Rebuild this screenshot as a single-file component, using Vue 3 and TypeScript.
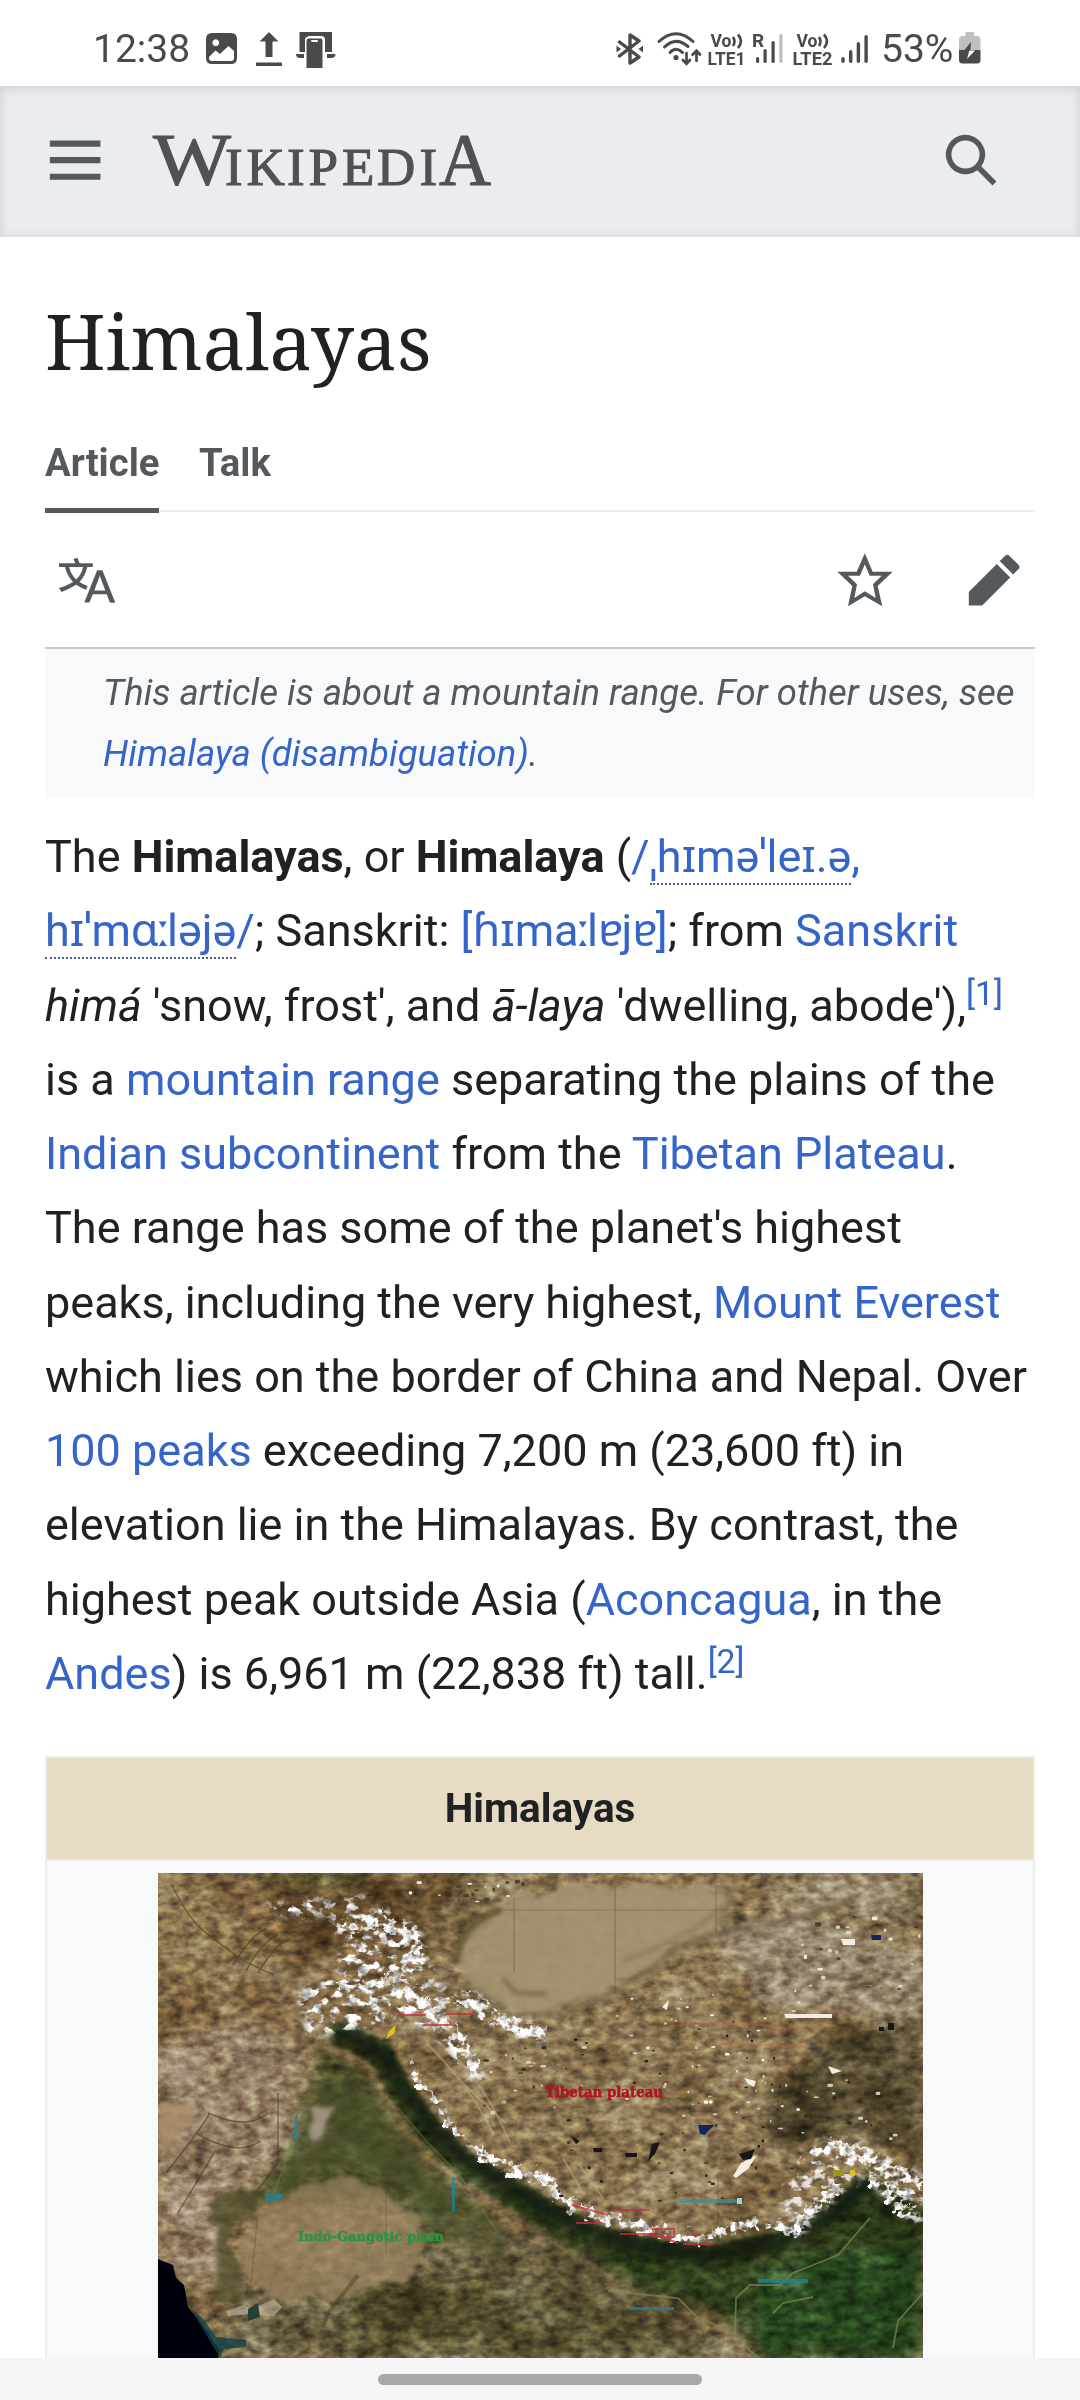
<script setup lang="ts">
interface Speck {
  x: number
  y: number
  w: number
  h: number
  fill: string
}

// Small deterministic generator so the lakes and snow patches stay in place.
function createRandom(seed: number): () => number {
  let s = seed
  return () => {
    s = (s * 16807) % 2147483647
    return s / 2147483647
  }
}

const rand = createRandom(4711)

function scatter(n: number, x0: number, y0: number, x1: number, y1: number, fills: string[], max: number): Speck[] {
  return Array.from({ length: n }, () => ({
    x: x0 + rand() * (x1 - x0),
    y: y0 + rand() * (y1 - y0),
    w: 1.5 + rand() * max,
    h: 1.2 + rand() * max * 0.6,
    fill: fills[Math.floor(rand() * fills.length)],
  }))
}

const specks: Speck[] = [
  ...scatter(55, 400, 140, 640, 330, ['#2b2a1d', '#1d2420', '#3a3622'], 3.2),
  ...scatter(50, 450, 115, 640, 250, ['#e6dccb', '#cdbfa5', '#fff8ee'], 3.4),
  ...scatter(24, 320, 170, 430, 250, ['#d9cdb5', '#3d3521', '#b7a481'], 4),
  ...scatter(26, 640, 40, 765, 120, ['#ddd2c4', '#efe9e4', '#4a4029'], 5),
  ...scatter(26, 600, 200, 740, 270, ['#d8cdb8', '#cfc6b4', '#2e2a1b'], 4),
  ...scatter(20, 250, 4, 370, 30, ['#efe8dc', '#4f4428'], 5),
]

const signalBars: number[] = [6, 13, 21, 28]
</script>

<template>
  <div class="screen">
    <div class="status">
      <span class="clock">12:38</span>
      <svg class="st-photo" width="31" height="31" viewBox="0 0 31 31">
        <path fill="#4a4a4a" fill-rule="evenodd" d="M6 0H25Q31 0 31 6V25Q31 31 25 31H6Q0 31 0 25V6Q0 0 6 0ZM9.8 6.3a3.4 3.4 0 1 0 .01 0ZM3 24.5Q3 28 6 28H25Q28 28 28 25V18L22.5 13 14 21 9.5 17.5 3 24Z" />
      </svg>
      <svg class="st-up" width="26" height="34" viewBox="0 0 26 34">
        <path fill="#4a4a4a" d="M13 0 22.5 9.5H16.5V25H9.5V9.5H3.5ZM0 30.5H26V34H0Z" />
      </svg>
      <svg class="st-link" width="40" height="37" viewBox="0 0 40 37">
        <path fill="#4a4a4a" d="M3.5 0H36V20H29V8Q29 4 25 4H14Q10 4 10 8V20H3.5ZM0 22H8V26H4Q0 26 0 22ZM31 22H39.5Q39.5 26 35 26H31Z" />
        <rect x="9" y="5" width="19" height="32" rx="2.500" fill="#fff" />
        <path fill="#4a4a4a" d="M12.500 6.500H25Q26.500 6.500 26.500 9V36H10.500V9Q10.500 6.500 12.500 6.500Z" />
        <rect x="15" y="8" width="7" height="2" rx="1" fill="#fff" />
      </svg>

      <svg class="st-bt" width="28" height="32" viewBox="0 0 28 32">
        <path fill="none" stroke="#4a4a4a" stroke-width="3.4" stroke-linejoin="round" stroke-linecap="round" d="M3.5 9 23 24 14 30V2L23 8 3.5 23" />
        <path fill="#4a4a4a" d="M.5 12.500 5 16 .5 19.5ZM27 12.500 22.500 16 27 19.5Z" />
      </svg>
      <svg class="st-wifi" width="46" height="34" viewBox="0 0 46 34">
        <g fill="none" stroke="#4a4a4a" stroke-width="3" stroke-linecap="round">
          <path d="M2 9.500Q19-6 36 9.500" />
          <path d="M7.500 15Q19 4 31 14.500" />
          <path d="M13 20.500Q19 14 25.500 20.500" />
          <path d="M29.500 21V31.500M25.800 28 29.500 31.700 33 28M39.500 29V19M35.500 22.800 39.500 18.800 43 22.500" stroke-width="2.700" />
        </g>
        <circle cx="19" cy="25.500" r="2.600" fill="#4a4a4a" />
      </svg>
      <svg class="st-lte1" width="42" height="42" viewBox="-2 -4 42 42">
        <text x="2.500" y="15" font-size="17.500" textLength="21" lengthAdjust="spacingAndGlyphs">Vo</text>
        <path d="M25 5Q28 9.500 25 14M30 2.500Q36 9.500 30 16" fill="none" stroke="#4a4a4a" stroke-width="2.700" />
        <text x="-.5" y="32.500" font-size="18.500" textLength="38" lengthAdjust="spacingAndGlyphs">LTE1</text>
      </svg>
      <svg class="st-sig1" width="33" height="38" viewBox="-2 -2 33 38">
        <text x="-1" y="15" font-size="19">R</text>
        <rect x="3" y="25" width="3.200" height="6" rx="1.600" fill="#4a4a4a" />
        <rect x="10.500" y="17" width="3.200" height="14" rx="1.600" fill="#4a4a4a" />
        <rect x="18.500" y="9" width="3.200" height="22" rx="1.600" fill="#4a4a4a" />
        <rect x="26.300" y="2" width="3.200" height="29" rx="1.600" fill="#bdbdbd" />
      </svg>
      <svg class="st-lte2" width="44" height="42" viewBox="-2 -4 44 42">
        <text x="3.500" y="15" font-size="17.500" textLength="21" lengthAdjust="spacingAndGlyphs">Vo</text>
        <path d="M26 5Q29 9.500 26 14M31 2.500Q37 9.500 31 16" fill="none" stroke="#4a4a4a" stroke-width="2.700" />
        <text x="-.5" y="32.500" font-size="18.500" textLength="40" lengthAdjust="spacingAndGlyphs">LTE2</text>
      </svg>
      <svg class="st-sig2" width="28" height="34" viewBox="0 0 28 34">
        <rect v-for="(h, i) in signalBars" :key="i" :x="0.3 + i * 7.7" :y="31 - h" width="3.400" :height="h" rx="1.700" fill="#4a4a4a" />
      </svg>
      <span class="percent">53%</span>
      <svg class="st-bat" width="22" height="32" viewBox="0 0 22 32">
        <path fill="#bfbfbf" d="M6.500 0H15V4H18Q21.500 4 21.500 8V18H0V8Q0 4 3.500 4H6.500Z" />
        <path fill="#4a4a4a" d="M0 18H21.500V28Q21.500 31.500 18 31.500H3.500Q0 31.500 0 28Z" />
        <path fill="#4a4a4a" d="M12 10 5 18.500H11L9 18.500H15.500L11.500 18Z" />
        <path fill="#fff" d="M10.300 18.500H16L8 27Z" />
      </svg>
    </div>

    <header class="header">
      <svg class="menu" width="56.250" height="56.250" viewBox="0 0 20 20"><path fill="#54595d" d="M1 3v2.200h18V3zm0 8.100h18V8.900H1zM1 17h18v-2.200H1z" /></svg>
      <svg class="logo" width="342" height="56" viewBox="0 0 342 56" role="img" aria-label="Wikipedia">
        <g class="logo-type">
          <text x="1" y="53" font-size="75" textLength="78" lengthAdjust="spacingAndGlyphs">W</text>
          <text y="53" font-size="53" x="73 94.500 135 156.500 190 225 267.500">IKIPEDI</text>
          <text x="287" y="53" font-size="74" textLength="52" lengthAdjust="spacingAndGlyphs">A</text>
        </g>
      </svg>
      <svg class="search" width="56.250" height="56.250" viewBox="0 0 20 20"><path fill="#54595d" d="M12.200 13.600a7 7 0 1 1 1.400-1.400l5.400 5.400-1.400 1.400zM3 8a5 5 0 1 0 10 0A5 5 0 0 0 3 8" /></svg>
    </header>

    <main class="content">
      <h1 class="title">Himalayas</h1>
      <nav class="tabs">
        <a class="tab active">Article</a>
        <a class="tab">Talk</a>
      </nav>

      <div class="actions">
        <svg class="lang" width="56.250" height="56.250" viewBox="0 0 20 20"><path fill="#54595d" d="M20 18h-1.440a.61.61 0 0 1-.4-.12.81.81 0 0 1-.23-.31L17 15h-5l-1 2.540a.77.77 0 0 1-.22.3.59.59 0 0 1-.4.14H9l4.550-11.470h1.890zm-3.530-4.310L14.890 9.500a11.620 11.620 0 0 1-.39-1.240q-.09.37-.19.69l-.19.56-1.580 4.190zm-6.300-1.580a13.430 13.430 0 0 1-2.910-1.410 11.460 11.460 0 0 0 2.810-5.370H12V4H7.310a4 4 0 0 0-.2-.56C6.870 2.790 6.600 2 6.600 2l-1.470.5s.4.89.6 1.500H0v1.330h2.150A11.230 11.230 0 0 0 5 10.700a17.190 17.190 0 0 1-5 2.100q.56.82.87 1.380a23.280 23.280 0 0 0 5.220-2.510 15.640 15.640 0 0 0 3.560 1.770zM3.630 5.330h4.910a8.110 8.110 0 0 1-2.450 4.450 9.110 9.110 0 0 1-2.460-4.450z" /></svg>
        <svg class="star" width="56" height="54" viewBox="174 70 168 162"><path fill="#54595d" fill-rule="evenodd" d="M257.500 71 281 126H341L296 169 310 230 257.500 200 207 230 220 169 175 126H233ZM257.500 104 243 138H207L234 164 226 205 257.500 185 290 205 282 164 308 138H272Z" /></svg>
        <svg class="pencil" width="56.250" height="56.250" viewBox="0 0 20 20"><path fill="#54595d" d="m16.770 8 1.940-2a1 1 0 0 0 0-1.410l-3.340-3.300a1 1 0 0 0-1.410 0L12 3.230zM1 14.250V19h4.750l9.960-9.960-4.750-4.750z" /></svg>
      </div>

      <div class="hatnote">This article is about a mountain range. For other uses, see<br /><a>Himalaya (disambiguation)</a>.</div>

      <p class="lead">
        The <b>Himalayas</b>, or <b>Himalaya</b> (<a>/<span class="ipa">ˌhɪməˈleɪ.ə</span>,<br />
        <span class="ipa">hɪˈmɑ<span class="long">ː</span>ləjə</span>/</a>; Sanskrit: <a>[ɦɪma<span class="long">ː</span>l<span class="turned">ɐ</span>j<span class="turned">ɐ</span>]</a>; from <a>Sanskrit</a><br />
        <i>himá</i> 'snow, frost', and <i>ā-laya</i> 'dwelling, abode'),<a class="ref">[1]</a><br />
        is a <a>mountain range</a> separating the plains of the<br />
        <a>Indian subcontinent</a> from the <a>Tibetan Plateau</a>.<br />
        The range has some of the planet's highest<br />
        peaks, including the very highest, <a>Mount Everest</a><br />
        which lies on the border of China and Nepal. Over<br />
        <a>100 peaks</a> exceeding 7,200 m (23,600 ft) in<br />
        elevation lie in the Himalayas. By contrast, the<br />
        highest peak outside Asia (<a>Aconcagua</a>, in the<br />
        <a>Andes</a>) is 6,961 m (22,838 ft) tall.<a class="ref">[2]</a>
      </p>

      <section class="infobox">
        <div class="infobox-title">Himalayas</div>
        <div class="infobox-image">
          <svg width="765" height="485" viewBox="0 0 765 485">
            <defs>
              <filter id="soft" x="-20%" y="-20%" width="140%" height="140%"><feGaussianBlur stdDeviation="7" /></filter>
              <filter id="soft2" x="-20%" y="-20%" width="140%" height="140%"><feGaussianBlur stdDeviation="2.500" /></filter>
              <filter id="hair"><feGaussianBlur stdDeviation="0.700" /></filter>
              <filter id="rough" x="0" y="0" width="100%" height="100%" color-interpolation-filters="sRGB">
                <feTurbulence type="fractalNoise" baseFrequency="0.030" numOctaves="4" seed="3" result="n" />
                <feDisplacementMap in="SourceGraphic" in2="n" scale="26" xChannelSelector="R" yChannelSelector="G" />
                <feGaussianBlur stdDeviation="2" />
              </filter>
              <filter id="grain" x="0" y="0" width="100%" height="100%" color-interpolation-filters="sRGB">
                <feTurbulence type="fractalNoise" baseFrequency="0.080 0.120" numOctaves="3" seed="8" />
                <feColorMatrix values="1.300 0 0 0 -0.150  1.300 0 0 0 -0.150  1.300 0 0 0 -0.150  0 0 0 0 1" />
              </filter>
              <filter id="blotch" x="0" y="0" width="100%" height="100%" color-interpolation-filters="sRGB">
                <feTurbulence type="fractalNoise" baseFrequency="0.018 0.024" numOctaves="3" seed="21" />
                <feColorMatrix values="1.300 0 0 0 -0.150  1.300 0 0 0 -0.150  1.300 0 0 0 -0.150  0 0 0 0 1" />
              </filter>
              <filter id="snow" x="-10%" y="-10%" width="120%" height="120%" color-interpolation-filters="sRGB">
                <feTurbulence type="fractalNoise" baseFrequency="0.090 0.120" numOctaves="3" seed="12" />
                <feColorMatrix values="0 1.500 0 0 0.180  0 1.500 0 0 0.170  0 1.500 0 0 0.170  7 0 0 0 -3.500" result="s" />
                <feGaussianBlur in="SourceGraphic" stdDeviation="3" result="b" />
                <feComposite in="s" in2="b" operator="in" />
                <feGaussianBlur stdDeviation="0.600" />
              </filter>
              <filter id="crest" x="-10%" y="-10%" width="120%" height="120%" color-interpolation-filters="sRGB">
                <feTurbulence type="fractalNoise" baseFrequency="0.110" numOctaves="3" seed="5" result="n" />
                <feColorMatrix values="0 1.300 0 0 0.320  0 1.300 0 0 0.310  0 1.300 0 0 0.300  7 0 0 0 -3.000" result="s" />
                <feDisplacementMap in="SourceGraphic" in2="n" scale="18" xChannelSelector="R" yChannelSelector="B" result="d" />
                <feComposite in="s" in2="d" operator="in" />
                <feGaussianBlur stdDeviation="0.600" />
              </filter>
            </defs>

            <rect width="765" height="485" fill="#86704c" />
            <g filter="url(#soft)">
              <path fill="#7d6340" d="M0 0H260V60L170 140 120 160 0 200Z" />
              <path fill="#8f7a52" d="M0 0H40L130 100 60 120 0 80Z" />
              <path fill="#565329" d="M80 0H235L200 14 110 10Z" />
              <path fill="#614a2c" d="M110 24 240 0H300L290 24 270 46 265 80 170 70 140 110 100 120 160 60Z" />
              <path fill="#867351" d="M300 0H420L345 34 300 100 290 50Z" />
              <path fill="#978268" d="M0 180 90 150 150 170 130 220 120 300 60 320 70 410 0 400Z" />
              <path fill="#8c7753" d="M300 130 400 120 560 40 765 10V250L650 230 600 300 560 345 440 330 330 270 270 180Z" />
              <path fill="#978970" d="M560 50 650 40 765 90V140L600 130Z" />
              <path fill="#8d7e5e" d="M570 0H765V60L640 30Z" />
              <path fill="#7b6440" d="M620 150H765V230L620 240Z" />
              <path fill="#54482d" d="M660 165 765 140V290L700 260 620 280 600 240Z" />
              <path fill="#52552f" d="M160 175 205 200 260 290 340 350 320 400 230 330 130 330 110 320 90 340 80 330 110 300 150 240Z" />
              <path fill="#6b5e3f" d="M70 410 170 400 300 340 400 370 500 430 600 485H60Z" />
              <path fill="#54502d" d="M170 440 210 410 340 410 480 440 560 485H180Z" />
              <path fill="#32431f" d="M340 320 420 350 540 375 640 355 710 300 765 340V485H610L560 440 490 420 410 375Z" />
              <path fill="#28451d" d="M600 390 765 370V485H600Z" />
            </g>
            <g fill="none" stroke-linecap="round" filter="url(#soft2)">
              <path stroke="#2b3519" stroke-width="26" d="M184 160 222 180 244 220 275 262 312 296 352 320 395 345 440 366 500 380 560 386 620 374 670 355 712 322 765 350" />
              <path stroke="#222c14" stroke-width="14" d="M190 158 228 184 252 226 280 258 312 288 360 314 395 336 440 358 500 375 560 380 620 366 660 350 704 312 730 338" />
            </g>

            <rect width="765" height="485" filter="url(#blotch)" class="soft-light" opacity=".6" />
            <rect width="765" height="485" filter="url(#grain)" class="overlay" opacity=".5" />

            <path filter="url(#soft)" fill="#4b512b" opacity=".6" d="M150 215 200 205 240 250 290 310 340 350 350 385 290 370 240 320 190 298 140 310 100 325 130 290Z" />
            <path filter="url(#soft)" fill="#a39271" opacity=".6" d="M320 60 400 20 580 15 560 60 500 90 440 130 350 140Z" />
            <g filter="url(#rough)">
              <path fill="#a49473" opacity=".85" d="M347 37 305 67 300 97 345 134 389 142 399 132 449 117 482 100 515 74 549 54 569 30 559 14 509 20 449 10 409 17 355 24Z" />
              <path fill="#9c8663" opacity=".7" d="M85 365 100 335 125 318 150 312 190 303 225 318 255 345 265 375 240 410 170 425 110 425 90 400Z" />
              <path fill="#a88c69" opacity=".85" d="M0 226 32 233 36 255 10 282 0 284Z" />
              <path fill="#aa9c8a" opacity=".85" d="M160 235 175 234 158 272 148 265Z" />
              <path fill="#4f4d2c" opacity=".7" d="M60 320 105 322 90 340 70 355 75 378 90 400 80 425 60 430 60 380 50 345Z" />
            </g>
            <g fill="none" stroke-linecap="round" filter="url(#soft2)">
              <path stroke="#161f0c" stroke-width="15" opacity=".6" d="M188 160 226 184 250 226 280 260 312 292 358 318 395 342 440 362 500 378 560 382 620 370 664 350 706 314" />
              <path stroke="#5c5130" stroke-width="7" d="M340 38Q304 50 298 88" opacity=".85" />
              <path stroke="#685b3a" stroke-width="4" d="M345 106 358 120 388 121" opacity=".8" />
              <path stroke="#6f624a" stroke-width="3.500" d="M290 112 320 118 350 140 395 142 449 122 482 104 515 78 550 64 650 42 700 26" />
              <path stroke="#73664c" stroke-width="3" d="M466 88 500 74 540 54 572 28 580 6" opacity=".7" />
              <path stroke="#a8977d" stroke-width="8" d="M20 280 60 230 115 185M75 92 120 106" opacity=".45" />
              <path stroke="#474a25" stroke-width="12" d="M92 326 124 322 140 295 158 278 190 260" opacity=".6" />
            </g>

            <g fill="none" filter="url(#hair)">
              <g stroke="#5b4d2f" stroke-width="1.200" opacity=".4">
                <path d="M340 37H600M457 14V120M558 12V60M356 25V100M560 300V370M228 240V380M100 340 92 420" />
              </g>
              <g stroke="#4a3c22" stroke-width="1.500" opacity=".6">
                <path d="M14 12Q30 46 48 60T86 88L116 102M75 92Q95 60 108 56M88 98Q104 68 120 62M100 100Q118 70 132 66" />
                <path d="M38 260Q80 285 102 268M50 240Q90 258 110 240M120 220V290L96 322M8 300Q40 260 52 240M20 340Q44 300 56 280" />
              </g>
              <g stroke="#c7b48f" stroke-width="2" opacity=".45">
                <path d="M268 170Q310 210 336 262M280 168Q326 206 352 270M300 205Q330 235 348 250M405 285 425 320M420 290 445 325" />
              </g>
              <g stroke="#7f8154" stroke-width="1.800" opacity=".75">
                <path d="M712 345 680 382 635 400 622 412 592 412 578 425 577 460 592 478 602 485M578 460 540 445 520 425 450 418M765 420 740 448 735 475M615 440 625 430 655 424" />
                <path d="M240 235 270 270 300 300 340 360M140 240 128 290 115 320" opacity=".5" />
              </g>
              <path stroke="#373a1a" stroke-width="4" opacity=".4" d="M200 402 170 440 165 455M225 440 280 410 350 400M300 450 370 430" />
            </g>

            <g filter="url(#snow)">
              <path fill="#fff" d="M172 44 225 36 259 50 270 84 278 108 292 118 319 118 342 138 392 156 392 170 362 166 330 153 312 134 292 134 287 149 312 172 330 210 308 204 288 176 270 157 239 146 192 158 150 164 138 120 179 100 182 70Z" />
              <path fill="#fff" d="M96 34 150 26 214 22 210 36 140 46Z" />
              <path fill="#fff" d="M636 284 665 264 702 270 735 286 765 302V352L742 342 712 308 690 296 660 298 648 302Z" />
              <path fill="#fff" opacity=".8" d="M625 310 650 282 690 292 700 310 660 340 645 362 620 364Z" />
            </g>
            <g fill="none" stroke="#fff" stroke-linejoin="round" filter="url(#crest)">
              <path stroke-width="7" d="M249 184 265 212 285 237 300 264 330 283 359 297 380 310" />
              <path stroke-width="11" d="M325 282 359 298 384 300 405 324 425 338 449 345 482 355 505 358 535 364 562 360 582 352 615 352 635 357 655 337 682 312" />
              <path stroke-width="13" d="M186 56 225 46 256 62 262 90M180 114 240 106 270 138 300 160 320 196M300 124 322 132 350 150 388 160M260 120 275 142M672 272 705 280 735 300 765 315M715 304 750 340" />
            </g>

            <g filter="url(#hair)">
              <rect v-for="(s, i) in specks" :key="i" :x="s.x" :y="s.y" :width="s.w" :height="s.h" :fill="s.fill" rx="1" />
              <path fill="#f3ece2" d="M575 303 583 290 599 282 590 296 578 305ZM626 141H674V145H628ZM504 134 511 127 509 137ZM586 205 598 208 596 214 590 211ZM670 193 684 198 674 201ZM683 66H697V72H685Z" />
              <path fill="#171913" d="M581 281 597 276 593 286 585 287ZM467 280H479V284H468ZM435 275H444V279H436ZM494 271 502 269 497 281 490 288ZM721 154H726V158H721ZM730 150H736V157H730ZM413 263 422 268 418 271Z" />
              <path fill="#19205e" d="M540 252H557L550 258 547 262 542 261ZM713 62H723V67H714Z" />
              <path fill="#03050f" d="M0 386 15 392 18 405 26 412 30 434 45 452 62 478 60 485H0Z" />
              <path fill="#0b4247" opacity=".8" d="M32 434 46 447 58 464 88 467 88 474 66 476 62 485 52 468Z" />
              <path fill="#ddd1bd" opacity=".45" d="M68 438 86 432 94 436 116 426 124 434 116 443 92 441 70 443Z" />
              <path fill="#244236" d="M90 436 100 430 102 444 90 448Z" />
              <path fill="none" stroke="#c72b43" stroke-width="2" opacity=".75" d="M240 142H268M288 141H316M265 152H298M414 332 450 342M456 337H492M418 350H445M462 361H495L520 370M495 356H516V364H496ZM525 371H555M528 362H542" />
              <path fill="#e0c315" d="M231 158 238 152 236 161 228 166ZM692 297H697V303H692Z" />
              <path fill="#9a9a18" d="M675 297H686V303H675Z" />
              <path fill="#24849b" opacity=".75" d="M107 321H124L127 324 116 329H107ZM294 304H297V338H294ZM137 243 140 238V270L136 266ZM600 406H650V410H600ZM472 434H516V437H472Z" />
              <path fill="#4a8a90" opacity=".8" d="M520 326H580V330H520Z" />
              <path fill="#9ed3dd" d="M579 325H584V331H579Z" />
              <path stroke="#b96248" opacity=".35" stroke-width="3" d="M510 153 590 150 650 158M555 170 650 174" fill="none" />
            </g>
            <g class="map-labels" filter="url(#hair)">
              <text x="387" y="224" font-size="14" fill="#b0141f" stroke="#b0141f" stroke-width=".5" textLength="118" lengthAdjust="spacingAndGlyphs">Tibetan plateau</text>
              <text x="140" y="368" font-size="13" fill="#2c9440" stroke="#2c9440" stroke-width=".5" textLength="146" lengthAdjust="spacingAndGlyphs">Indo-Gangetic plain</text>
            </g>
          </svg>
        </div>
      </section>
    </main>

    <footer class="gesture"><div class="pill"></div></footer>
  </div>
</template>

<style>
html,
body {
  margin: 0;
  background: #fff;
}
</style>

<style scoped>
.screen {
  width: 1080px;
  height: 2400px;
  display: flex;
  flex-direction: column;
  overflow: hidden;
  background: #fff;
  color: #202122;
  font-family: Roboto, "Noto Sans", sans-serif;
}
svg {
  display: block;
  flex: none;
}
.status {
  box-sizing: border-box;
  height: 86px;
  flex: none;
  display: flex;
  align-items: flex-start;
  padding: 32px 0 0 93px;
  color: #4a4a4a;
}
.clock,
.percent {
  font-size: 39px;
  line-height: 46px;
  margin-top: -6px;
  white-space: nowrap;
}
.clock { width: 113px; }
.percent { width: 78px; margin-left: 12px; }
.status text {
  fill: #4a4a4a;
  font-family: Roboto, sans-serif;
  font-weight: 700;
}
.st-photo { margin-top: 1px; }
.st-up { margin-left: 19px; }
.st-link { margin-left: 14px; }
.st-bt { margin: 1px 0 0 280px; }
.st-wifi { margin-left: 13px; }
.st-lte1 { margin: -4px 0 0 3px; }
.st-sig1 { margin: -2px 0 0 3px; }
.st-lte2 { margin: -4px 0 0 7px; }
.st-sig2 { margin-left: 6px; }

.header {
  box-sizing: border-box;
  height: 151px;
  flex: none;
  display: flex;
  align-items: flex-start;
  padding: 46px 81px 0 47px;
  background: #eaecf0;
  box-shadow: inset 0 0 12px rgba(0, 0, 0, 0.07), inset 0 4px 12px rgba(0, 0, 0, 0.06);
}
.logo {
  margin: 0 0 0 49px;
  overflow: visible;
}
.logo-type {
  font-family: "Liberation Serif", serif;
  fill: #505153;
  stroke: #505153;
  stroke-width: 1.1;
}
.search { margin-left: auto; }

.content {
  flex: 1;
  min-height: 0;
  overflow: hidden;
  padding: 0 45px;
}
.title {
  margin: 0;
  height: 198px;
  padding-top: 50px;
  box-sizing: border-box;
  font-family: "Noto Serif", "DejaVu Serif", serif;
  font-size: 76.5px;
  line-height: 106px;
  font-weight: 400;
}
.tabs {
  box-sizing: border-box;
  height: 77px;
  display: flex;
  gap: 39.5px;
  box-shadow: inset 0 -2px #eaecf0;
}
.tab {
  box-sizing: border-box;
  height: 78px;
  font-size: 38.25px;
  line-height: 56px;
  font-weight: 700;
  color: #54595d;
}
.tab.active { border-bottom: 5px solid #54595d; }
.actions {
  box-sizing: border-box;
  height: 137px;
  display: flex;
  align-items: flex-start;
  padding: 40px 13px 0 14px;
  border-bottom: 2px solid #c8c9cb;
}
.star { margin: 1px 0 0 auto; }
.pencil { margin-left: 73px; }
.hatnote {
  box-sizing: border-box;
  height: 149px;
  padding: 13px 0 0 58px;
  background: #f8f9fb;
  color: #54595d;
  font-size: 36.56px;
  line-height: 61px;
  font-style: italic;
  white-space: nowrap;
}
a { color: #3565c8; }
a.tab { color: #54595d; }
.lead {
  margin: 22px 0 0;
  font-size: 45px;
  line-height: 74.25px;
  white-space: nowrap;
}
.ipa { border-bottom: 2px dotted #45628f; }
.long { margin: 0 -3px; }
.turned { letter-spacing: -1.800px; }
.ref {
  font-size: 33.75px;
  line-height: 1;
  vertical-align: 16px;
}
.infobox {
  box-sizing: border-box;
  margin-top: 45px;
  height: 800px;
  border: 2px solid #eaecf0;
  background: #f8f9fb;
}
.infobox-title {
  height: 101px;
  line-height: 101px;
  background: #e7dcc3;
  border-bottom: 2px solid #eaecf0;
  text-align: center;
  font-size: 40.5px;
  font-weight: 700;
}
.infobox-image {
  display: flex;
  justify-content: center;
  padding-top: 12px;
}
.overlay { mix-blend-mode: overlay; }
.soft-light { mix-blend-mode: soft-light; }
.map-labels {
  font-family: "DejaVu Serif", serif;
  font-weight: 700;
}
.gesture {
  flex: none;
  box-sizing: border-box;
  height: 42px;
  padding-top: 16px;
  display: flex;
  justify-content: center;
  background: #f5f5f5;
}
.pill {
  width: 324px;
  height: 11px;
  border-radius: 6px;
  background: #a9a9a9;
}
</style>
